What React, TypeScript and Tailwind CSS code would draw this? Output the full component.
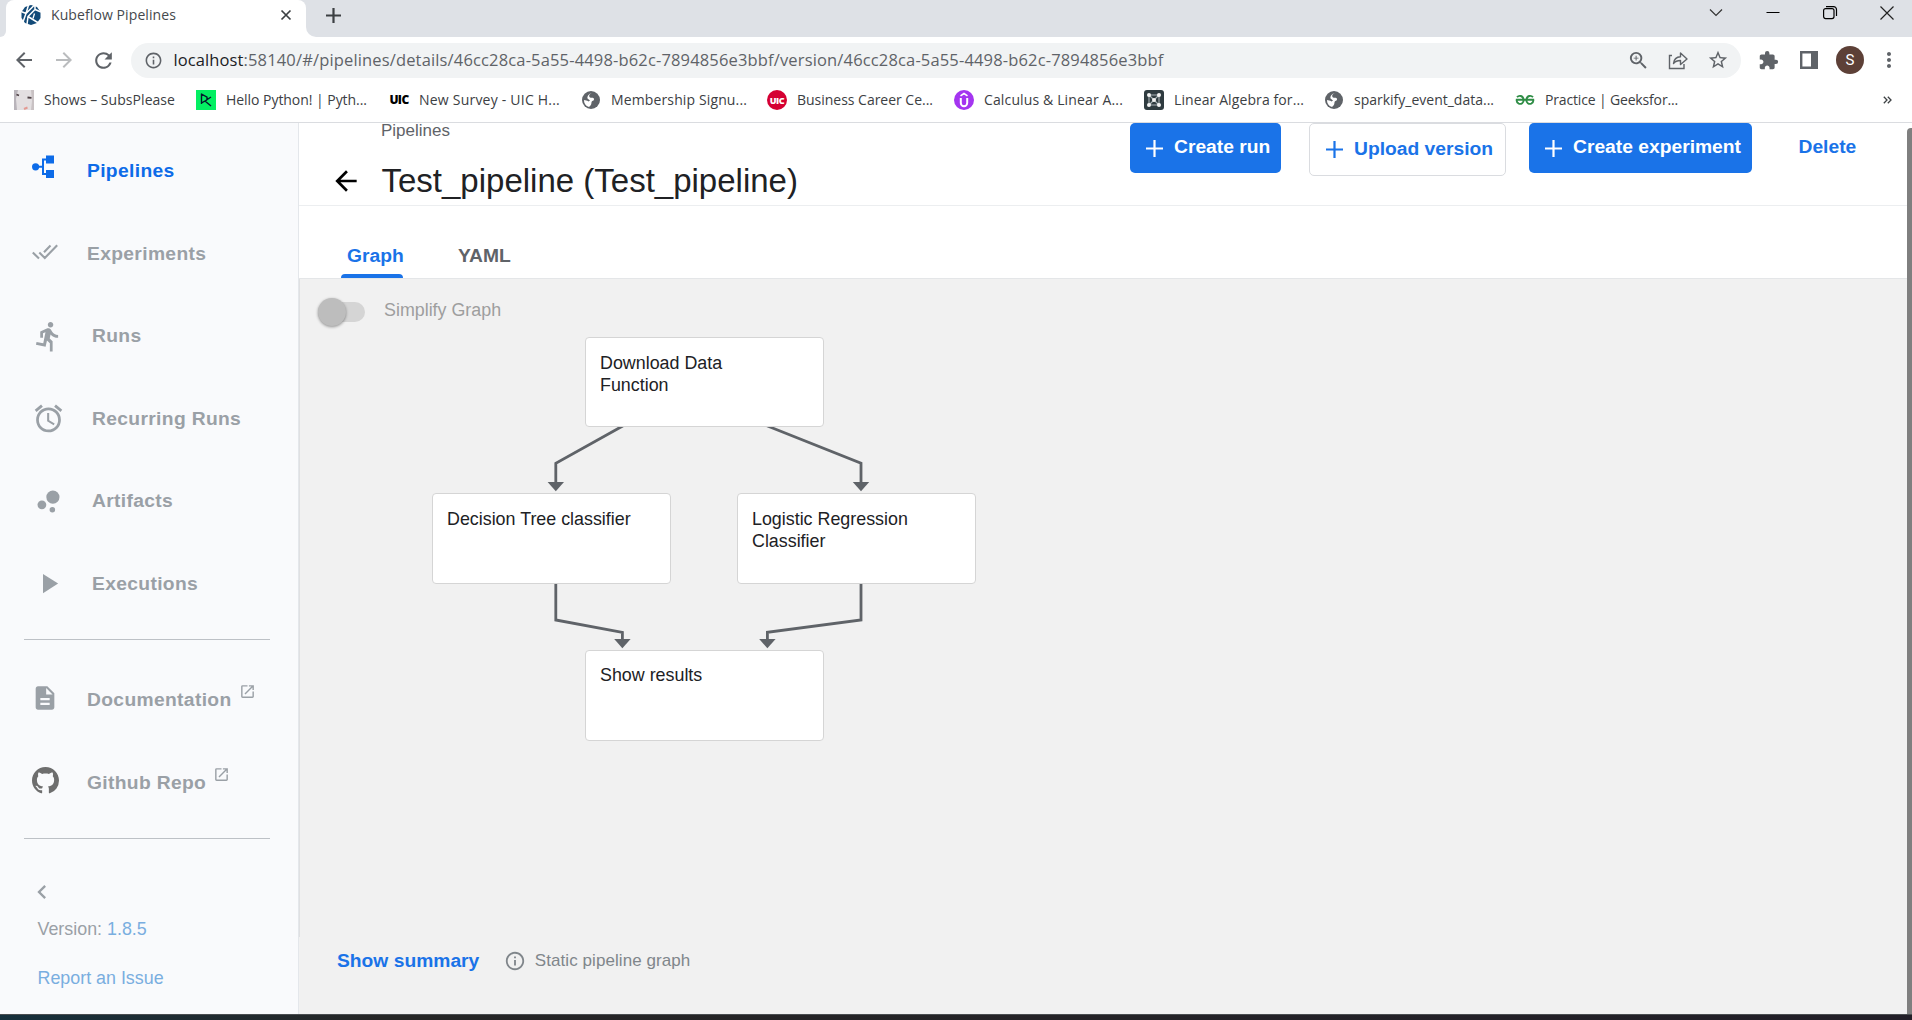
import { useLayoutEffect, useRef, useState, type ReactNode } from "react";
import {
  MdAlarm,
  MdArrowBack,
  MdArrowForward,
  MdBubbleChart,
  MdChevronLeft,
  MdDirectionsRun,
  MdDescription,
  MdExtension,
  MdInfoOutline,
  MdMoreVert,
  MdOpenInNew,
  MdPlayArrow,
  MdRefresh,
  MdStarBorder,
  MdZoomIn,
} from "react-icons/md";

const UI = "font-['Open_Sans','Noto_Sans',sans-serif]";

/** One line of text whose tracking is adjusted so that it fills a fixed width. */
function Fit({ width, className = "", children }: { width: number; className?: string; children: ReactNode }) {
  const ref = useRef<HTMLSpanElement>(null);
  const [spacing, setSpacing] = useState(0);
  useLayoutEffect(() => {
    const el = ref.current;
    if (!el) return;
    const count = (el.textContent ?? "").length;
    setSpacing((width - el.getBoundingClientRect().width) / count);
  }, [width]);
  return (
    <span ref={ref} className={`inline-block whitespace-pre ${className}`} style={{ letterSpacing: spacing }}>
      {children}
    </span>
  );
}

function KubeflowLogo() {
  return (
    <svg width="20" height="20" viewBox="0 0 20 20">
      <path d="M10 0l6 2 3.500 5v6L16 18l-6 2-6-2L.5 13V7L4 2z" fill="#124a78" />
      <path d="M7.500 0 5 8.500 13 .5M0 6.500 5 8.500 2 17M6 19.500 7 11.500 14 4.500 20 7M7 11.500 17.500 18M14 4.500V0" fill="none" stroke="#fff" strokeWidth="1.500" />
      <path d="M13.500 8.500 12 13.500" stroke="#fff" strokeWidth="1.300" />
    </svg>
  );
}

function Globe() {
  return (
    <svg width="18" height="18" viewBox="0 0 18 18">
      <circle cx="9" cy="9" r="9" fill="#5f6368" />
      <path d="M10.500 1.800C7 3 6.500 5.200 8 6.500c1.500.8 3.500-.5 4 1.500.2 1.200-.8 1.800-2 2.200C9 11 10 12.500 8.500 14.500L7 16C3.500 15 1.800 12 2 9c1.500.2 3 .5 4.500 1.500L8 9.500 5.500 7.500C5 5.500 6.500 3 10.500 1.800z" fill="#fff" />
    </svg>
  );
}

function AnimeIcon() {
  return (
    <svg width="20" height="20" viewBox="0 0 20 20">
      <rect width="20" height="20" fill="#e3dfe1" />
      <path d="M0 0h4L2 9l1 11H0z" fill="#b9b4ba" />
      <path d="M17 0h3v20h-3l1-9z" fill="#c9c2c4" />
      <path d="M2.500 4.500l2.500 1M13.500 7.500l4 .3" stroke="#4e4145" strokeWidth="1.800" />
      <path d="M10 19l3.500-1.500" stroke="#e39a93" strokeWidth="2" />
    </svg>
  );
}

function DataCampIcon() {
  return (
    <svg width="20" height="20" viewBox="0 0 20 20">
      <rect width="20" height="20" fill="#03ef62" />
      <path d="M5.500 14V4l5.500 3.200v2.600L5.500 13M15 7l-6 4 6 5" fill="none" stroke="#05192d" strokeWidth="1.400" strokeLinejoin="round" />
    </svg>
  );
}

function UicText() {
  return (
    <span className="flex w-5 justify-center font-['Open_Sans',sans-serif] text-[12px] leading-5 font-extrabold tracking-[-0.6px] text-black">
      UIC
    </span>
  );
}

function UicRound() {
  return (
    <span className="flex size-5 items-center justify-center rounded-full bg-[#d50032] font-['Open_Sans',sans-serif] text-[9px] leading-none font-extrabold tracking-[-0.4px] text-white">
      UIC
    </span>
  );
}

function UdemyIcon() {
  return (
    <svg width="20" height="20" viewBox="0 0 20 20">
      <circle cx="10" cy="10" r="10" fill="#a435f0" />
      <path d="M6.800 8v5a3.200 3.200 0 0 0 6.400 0V8" fill="none" stroke="#fff" strokeWidth="2" />
      <path d="M6.500 5.800 10 3.500l3.500 2.300" fill="none" stroke="#fff" strokeWidth="1.600" />
    </svg>
  );
}

function NetIcon() {
  return (
    <svg width="20" height="20" viewBox="0 0 20 20">
      <rect width="20" height="20" rx="3" fill="#2f3b40" />
      <path d="M5 5h10v10H5zL15 15M15 5 5 15" fill="none" stroke="#a9b2b5" strokeWidth="1.100" />
      <g fill="#f2f2f2">
        <circle cx="5" cy="5" r="2" />
        <circle cx="15" cy="5" r="2" />
        <circle cx="5" cy="15" r="2" />
        <circle cx="15" cy="15" r="2" />
        <circle cx="10" cy="10" r="2" />
      </g>
    </svg>
  );
}

function GfgIcon() {
  return (
    <svg width="20" height="20" viewBox="0 0 20 20" fill="none" stroke="#2f8d46" strokeWidth="1.900">
      <path d="M2 7.200C4 5 8 5.500 8.600 9.500 9 13 6 14.500 3.800 13.600 2 12.800 1.500 11 1.700 9.800H18.300C18.500 11 18 12.800 16.200 13.600 14 14.500 11 13 11.400 9.500 12 5.500 16 5 18 7.200" />
    </svg>
  );
}

const bookmarks = [
  { icon: <AnimeIcon />, label: "Shows – SubsPlease", width: 131, slot: "w-[182px]" },
  { icon: <DataCampIcon />, label: "Hello Python! | Pyth...", width: 141, slot: "w-[193px]" },
  { icon: <UicText />, label: "New Survey - UIC H...", width: 141, slot: "w-[192px]" },
  { icon: <Globe />, label: "Membership Signu...", width: 136, slot: "w-[186px]" },
  { icon: <UicRound />, label: "Business Career Ce...", width: 136, slot: "w-[187px]" },
  { icon: <UdemyIcon />, label: "Calculus & Linear A...", width: 139, slot: "w-[190px]" },
  { icon: <NetIcon />, label: "Linear Algebra for...", width: 130, slot: "w-[180px]" },
  { icon: <Globe />, label: "sparkify_event_data...", width: 140, slot: "w-[191px]" },
  { icon: <GfgIcon />, label: "Practice | Geeksfor...", width: 133, slot: "w-[190px]" },
];

function BrowserChrome() {
  return (
    <header className={`h-[123px] shrink-0 border-b border-[#dadce0] bg-white ${UI}`}>
      <div className="flex h-[37px] bg-[#dee1e6]">
        <div className="h-full w-1.5 bg-white">
          <div className="h-full rounded-br-[8px] bg-[#dee1e6]" />
        </div>
        <div className="flex h-full w-[300px] items-start rounded-t-[8px] bg-white pt-[5px] pl-[15px]">
          <KubeflowLogo />
          <div className="ml-[10px] w-[229px] text-[14px] leading-5 text-[#45494d]">
            <Fit width={125}>Kubeflow Pipelines</Fit>
          </div>
          <svg className="mt-[4px]" width="12" height="12" viewBox="0 0 12 12">
            <path d="M1.500 1.500l9 9M10.500 1.500l-9 9" stroke="#3c4043" strokeWidth="1.700" />
          </svg>
        </div>
        <div className="h-full w-5 bg-white">
          <div className="h-full w-full rounded-bl-[10px] bg-[#dee1e6]" />
        </div>
        <svg className="mt-2" width="15" height="15" viewBox="0 0 15 15">
          <path d="M7.500 0v15M0 7.500h15" stroke="#3c4043" strokeWidth="2.200" />
        </svg>
        <div className="ml-auto flex gap-[41px] pt-[5px] pr-[17px]">
          <svg width="16" height="16" viewBox="0 0 16 16" fill="none" stroke="#333" strokeWidth="1.200">
            <path d="M2 4.500 8 10.500l6-6" />
          </svg>
          <svg width="16" height="16" viewBox="0 0 16 16">
            <path d="M1.500 7.500h13" stroke="#000" />
          </svg>
          <svg width="16" height="16" viewBox="0 0 16 16" fill="none" stroke="#000" strokeWidth="1.200">
            <rect x="1.600" y="3.600" width="10.400" height="10" rx="2" />
            <path d="M4 1.600h7.500a3 3 0 0 1 3 3V11" />
          </svg>
          <svg width="16" height="16" viewBox="0 0 16 16">
            <path d="M1.500 1.500l13 13M14.500 1.500l-13 13" stroke="#222" strokeWidth="1.200" />
          </svg>
        </div>
      </div>

      <div className="flex h-[45px] items-center pt-px pl-[12px] text-[#5f6368]">
        <MdArrowBack size={24} />
        <MdArrowForward size={24} className="ml-[16px] text-[#babcbe]" />
        <MdRefresh size={25} className="ml-[15px]" />
        <div className="ml-[15px] flex h-[35px] w-[1610px] items-center rounded-full bg-[#f1f3f4] pl-[13px]">
          <MdInfoOutline size={19} />
          <div className="ml-[10.5px] flex text-[16.5px] leading-[22px]">
            <Fit width={70} className="text-[#202124]">localhost</Fit>
            <Fit width={920}>
              :58140/#/pipelines/details/46cc28ca-5a55-4498-b62c-7894856e3bbf/version/46cc28ca-5a55-4498-b62c-7894856e3bbf
            </Fit>
          </div>
          <div className="ml-auto flex items-center gap-[18px] pr-[12px]">
            <MdZoomIn size={23} />
            <svg width="21" height="20" viewBox="0 0 21 20" fill="none" stroke="#5f6368" strokeWidth="1.400">
              <path d="M4 5.500H1.500V18.500H16V14" />
              <path d="M5.500 13.500c.5-4.500 3-6.500 7-6.700V3l6.500 6-6.500 5.500v-4c-3.500 0-5.500 1-7 3z" strokeLinejoin="round" />
            </svg>
            <MdStarBorder size={22} />
          </div>
        </div>
        <MdExtension size={21} className="ml-[17px]" />
        <svg className="ml-[21px]" width="18" height="18" viewBox="0 0 18 18">
          <path d="M1.200 1.200h15.600v15.600H1.200z" fill="none" stroke="#5f6368" strokeWidth="2.400" />
          <path d="M11 1h6v16h-6z" fill="#5f6368" />
        </svg>
        <span className="ml-[18px] flex size-[28px] items-center justify-center rounded-full bg-[#5d4037] font-['Roboto',sans-serif] text-[15px] text-white">
          S
        </span>
        <MdMoreVert size={24} className="ml-[13px]" />
      </div>

      <div className="flex h-[36px] items-center pl-[14px] text-[14px] leading-5 text-[#3c4043]">
        {bookmarks.map((b) => (
          <div key={b.label} className={`flex shrink-0 items-center ${b.slot}`}>
            <span className="mr-[10px] flex w-5 justify-center">{b.icon}</span>
            <Fit width={b.width}>{b.label}</Fit>
          </div>
        ))}
        <svg className="ml-[178px]" width="9" height="8" viewBox="0 0 9 8" fill="none" stroke="#3c4043" strokeWidth="1.300">
          <path d="M.8.800 4 4 .8 7.200M4.800.800 8 4 4.800 7.200" />
        </svg>
      </div>
    </header>
  );
}

function PipelineIcon() {
  return (
    <svg width="22" height="24" viewBox="0 0 22 24" fill="#0d6be8">
      <circle cx="3.600" cy="11.800" r="3.600" />
      <path d="M14 .5h8v8h-8zM14 15h8v8h-8z" />
      <path d="M4 11.800h8M15 4.500h-4v14.500h4" fill="none" stroke="#0d6be8" strokeWidth="2" />
    </svg>
  );
}

function ExperimentsIcon() {
  return (
    <svg width="26" height="16" viewBox="0 0 26 16" fill="none" stroke="#9aa0a6" strokeWidth="2.100">
      <path d="M.8 8.500 7 14.500M7.300 8.500l5.500 5.500L25.200 1.300M12 8.300 18.500 1.500" />
    </svg>
  );
}

function NavRow({ icon, iconPad, label, external }: { icon: ReactNode; iconPad: string; label: string; external?: boolean }) {
  return (
    <div className="flex h-[82.5px] items-center">
      <div className={`flex h-full shrink-0 items-center ${iconPad}`}>{icon}</div>
      <span className="shrink-0 pt-px">{label}</span>
      {external && <MdOpenInNew size={17} className="mb-[17px] ml-[7px]" />}
    </div>
  );
}

function SideNav() {
  return (
    <nav className="flex w-[299px] shrink-0 flex-col border-r border-[#e4e7eb] bg-[#f9fafc] pt-[7px] text-[#9aa0a6]">
      <div className="text-[19.25px] font-bold tracking-[0.34px]">
        <div className="text-[#0d6be8]">
          <NavRow icon={<PipelineIcon />} iconPad="w-[87px] pl-8 pb-[9px]" label="Pipelines" />
        </div>
        <NavRow icon={<ExperimentsIcon />} iconPad="w-[87px] pl-8 pb-[4px]" label="Experiments" />
        <NavRow icon={<MdDirectionsRun size={33} />} iconPad="w-[92px] pl-8" label="Runs" />
        <NavRow icon={<MdAlarm size={33} />} iconPad="w-[92px] pl-8" label="Recurring Runs" />
        <NavRow icon={<MdBubbleChart size={33} />} iconPad="w-[92px] pl-8" label="Artifacts" />
        <NavRow icon={<MdPlayArrow size={33} />} iconPad="w-[92px] pl-8" label="Executions" />
      </div>
      <div className="mt-[14px] ml-6 w-[246px] border-t border-[#bdc1c6]" />
      <div className="mt-[19px] text-[19.25px] font-bold tracking-[0.34px]">
        <NavRow icon={<MdDescription size={28} />} iconPad="w-[87px] pl-[31px] pb-[4px]" label="Documentation" external />
        <NavRow
          icon={
            <svg width="27" height="27" viewBox="0 0 16 16" fill="#6e6e6e">
              <path d="M8 0C3.580 0 0 3.580 0 8c0 3.540 2.290 6.530 5.470 7.590.4.070.55-.17.550-.38 0-.19-.01-.82-.01-1.490-2.010.37-2.530-.49-2.690-.94-.09-.23-.48-.94-.82-1.130-.28-.15-.68-.52-.01-.53.630-.01 1.080.58 1.230.82.720 1.210 1.870.87 2.330.66.070-.52.280-.87.510-1.070-1.780-.2-3.640-.89-3.640-3.950 0-.87.310-1.590.82-2.150-.08-.2-.36-1.020.08-2.120 0 0 .67-.21 2.200.82.640-.18 1.320-.27 2-.27s1.360.09 2 .27c1.530-1.040 2.200-.82 2.200-.82.440 1.100.16 1.920.08 2.120.51.560.82 1.270.82 2.150 0 3.070-1.870 3.750-3.650 3.950.29.250.54.730.54 1.480 0 1.070-.01 1.930-.01 2.200 0 .21.150.46.550.38A8.010 8.010 0 0 0 16 8c0-4.420-3.580-8-8-8z" />
            </svg>
          }
          iconPad="w-[87px] pl-8 pb-[4px]"
          label="Github Repo"
          external
        />
      </div>
      <div className="mt-[14px] ml-6 w-[246px] border-t border-[#bdc1c6]" />
      <MdChevronLeft size={28} className="mt-[39px] ml-7" />
      <div className="mt-[11px] ml-[37.5px] text-[17.875px] leading-[24px]">
        Version: <span className="text-[#79aee0]">1.8.5</span>
      </div>
      <div className="mt-[25px] ml-[37.5px] text-[17.875px] leading-[24px] text-[#79aee0]">Report an Issue</div>
    </nav>
  );
}

function Plus() {
  return (
    <svg width="17" height="17" viewBox="0 0 17 17" className="shrink-0">
      <path d="M8.500 0v17M0 8.500h17" stroke="currentColor" strokeWidth="2.200" />
    </svg>
  );
}

function Toolbar() {
  return (
    <div className="flex h-[83px] shrink-0 border-b border-[#eceef0]">
      <div className="w-[830px] shrink-0">
        <div className="-mt-[2px] ml-[82px] text-[17px] leading-[20px] text-[#5f6368]">Pipelines</div>
        <div className="mt-[21px] flex items-center pl-[31px]">
          <MdArrowBack size={32} className="text-black" />
          <span className="ml-[19.5px] text-[33px] leading-[38px] text-[#202124]">Test_pipeline (Test_pipeline)</span>
        </div>
      </div>
      <div className="flex flex-1 items-start text-[19.25px] font-bold text-[#1a73e8]">
        <button className="ml-px flex h-[50px] w-[151px] items-center rounded-[5px] bg-[#1a73e8] pl-[16px] text-white">
          <Plus />
          <span className="ml-[11px] -mt-px whitespace-nowrap">Create run</span>
        </button>
        <button className="ml-[28px] flex h-[53px] w-[197px] items-center rounded-[5px] border border-[#dadce0] pl-[16px]">
          <Plus />
          <span className="ml-[11px] -mt-px whitespace-nowrap">Upload version</span>
        </button>
        <button className="ml-[23px] flex h-[50px] w-[223px] items-center rounded-[5px] bg-[#1a73e8] pl-[16px] text-white">
          <Plus />
          <span className="ml-[11px] -mt-px whitespace-nowrap">Create experiment</span>
        </button>
        <button className="ml-[46.5px] h-[49px]">Delete</button>
      </div>
    </div>
  );
}

const nodes = [
  { label: "Download Data Function", place: "left-[286px] top-[58px] h-[90px] pt-[14px]", text: "w-[150px]" },
  { label: "Decision Tree classifier", place: "left-[133px] top-[214px] h-[91px] pt-[14px]", text: "w-[200px]" },
  { label: "Logistic Regression Classifier", place: "left-[438px] top-[214px] h-[91px] pt-[14px]", text: "w-[190px]" },
  { label: "Show results", place: "left-[286px] top-[371px] h-[91px] pt-[13px]", text: "w-[190px]" },
];

function Graph() {
  return (
    <div className="relative min-h-0 flex-1 bg-[#f1f1f1]">
      <div className="absolute top-0 left-0 h-[658px] w-px bg-[#dfe0e2]" />
      <div className="flex items-center pt-[19px] pl-[19px]">
        <div className="relative flex h-[28px] w-[48px] items-center">
          <div className="h-[20px] w-[47px] rounded-full bg-[#d5d5d5]" />
          <div className="absolute left-0 size-[28px] rounded-full bg-[#bdbdbd] shadow-[0_1px_3px_rgba(0,0,0,0.4)]" />
        </div>
        <span className="-mt-[5px] ml-[18px] text-[17.875px] leading-6 text-[#9e9e9e]">Simplify Graph</span>
      </div>

      <svg className="absolute top-0 left-0" width="700" height="480" viewBox="299 279 700 480">
        <g fill="none" stroke="#5f6368" strokeWidth="2.800">
          <path d="M624.500 425 555.800 463.300V483" />
          <path d="M765 425 861 463.300V483" />
          <path d="M555.800 583V620L622.400 632.300V640" />
          <path d="M861 583V620L767.400 632.300V640" />
        </g>
        <g fill="#5f6368">
          <path d="M547.600 482h16.400l-8.200 9.200z" />
          <path d="M852.800 482h16.400l-8.200 9.200z" />
          <path d="M614.200 639h16.400l-8.200 9.200z" />
          <path d="M759.200 639h16.400l-8.200 9.200z" />
        </g>
      </svg>
      {nodes.map((n) => (
        <div
          key={n.label}
          className={`absolute w-[239px] rounded-[4px] border border-[#d5d5d5] bg-white pl-[14px] text-[17.875px] leading-[22px] text-[#202124] ${n.place}`}
        >
          <div className={n.text}>{n.label}</div>
        </div>
      ))}

      <div className="absolute top-[670px] left-[38px] flex items-center leading-6">
        <span className="text-[19.25px] font-bold text-[#1a73e8]">Show summary</span>
        <MdInfoOutline size={22} className="ml-[24.5px] text-[#80868b]" />
        <span className="ml-[9px] text-[17px] tracking-[0.07px] text-[#80868b]">Static pipeline graph</span>
      </div>
    </div>
  );
}

export default function App() {
  return (
    <div className="flex h-[1020px] w-[1912px] flex-col overflow-hidden bg-white font-['Liberation_Sans',Arial,sans-serif]">
      <BrowserChrome />
      <div className="flex min-h-0 flex-1">
        <SideNav />
        <main className="flex min-w-0 flex-1 flex-col">
          <Toolbar />
          <div className="flex h-[73px] shrink-0 items-end border-b border-[#e4e6e8] pl-[42px] text-[19.25px] font-bold">
            <div className="flex w-[62px] flex-col text-[#1a73e8]">
              <span className="mb-[6px] pl-[6px] leading-6">Graph</span>
              <span className="h-1 rounded-t-[4px] bg-[#1a73e8]" />
            </div>
            <span className="mb-[10px] ml-[55px] leading-6 text-[#5f6368]">YAML</span>
          </div>
          <Graph />
        </main>
        <div className="w-[5px] shrink-0 bg-white pt-[5px]">
          <div className="h-full rounded-tl-[4px] bg-[#7f7f7f]" />
        </div>
      </div>
      <div className="h-1.5 shrink-0 border-t border-[#4a4d50] bg-linear-to-r from-[#16303c] via-[#262626] via-20% to-[#221f28]" />
    </div>
  );
}
